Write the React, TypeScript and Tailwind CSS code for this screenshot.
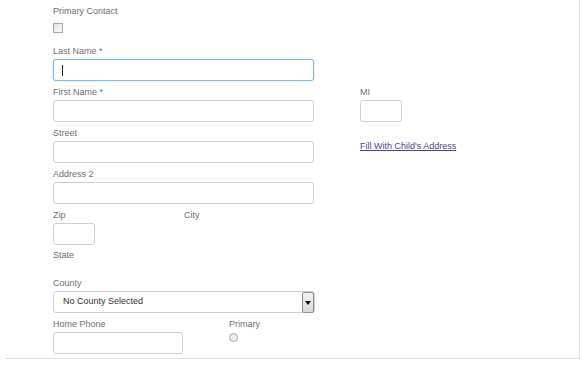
import React from "react";

const font = { fontFamily: '"Liberation Sans", Arial, sans-serif' };

function Label({ children, className = "" }: { children: React.ReactNode; className?: string }) {
  return <div className={`h-[11px] leading-[11px] text-[9px] text-[#707070] whitespace-nowrap ${className}`}>{children}</div>;
}

function Input({ w, focused = false, className = "" }: { w: string; focused?: boolean; className?: string }) {
  return (
    <div
      className={`${w} h-[22px] rounded-[3px] bg-white border flex items-center ${
        focused ? "border-[#7fb8ea] shadow-[0_0_2px_rgba(102,175,233,0.6)]" : "border-[#cfcfcf]"
      } ${className}`}
    >
      {focused && <div className="ml-[8px] w-[1px] h-[11px] bg-[#222]" />}
    </div>
  );
}

export default function App() {
  return (
    <div className="w-[582px] h-[365px] bg-white overflow-hidden" style={font}>
      <div className="ml-[5px] w-[575px] h-[359px] border-r border-b border-[#dedede] pl-[48px] pt-[6px] flex flex-col">
        <Label>Primary Contact</Label>
        <div className="mt-[6px] w-[10px] h-[10px] border border-[#a8a8a8] bg-gradient-to-br from-[#e4e4e4] to-[#f8f8f8]" />

        <Label className="mt-[13px]">Last Name *</Label>
        <Input w="w-[261px]" focused className="mt-[2px]" />

        <div className="flex mt-[6px]">
          <div className="w-[307px] flex flex-col">
            <Label>First Name *</Label>
            <Input w="w-[261px]" className="mt-[2px]" />
          </div>
          <div className="flex flex-col">
            <Label>MI</Label>
            <Input w="w-[42px]" className="mt-[2px]" />
          </div>
        </div>

        <div className="flex mt-[6px]">
          <div className="w-[307px] flex flex-col">
            <Label>Street</Label>
            <Input w="w-[261px]" className="mt-[2px]" />
          </div>
          <div className="pt-[13px] text-[9px] leading-[11px]">
            <span className="text-[#553d92] underline whitespace-nowrap">Fill With Child's Address</span>
          </div>
        </div>

        <Label className="mt-[6px]">Address 2</Label>
        <Input w="w-[261px]" className="mt-[2px]" />

        <div className="flex mt-[6px]">
          <div className="w-[131px] flex flex-col">
            <Label>Zip</Label>
            <Input w="w-[42px]" className="mt-[2px]" />
          </div>
          <Label>City</Label>
        </div>

        <Label className="mt-[5px]">State</Label>

        <Label className="mt-[17px]">County</Label>
        <div className="mt-[2px] w-[262px] h-[22px] rounded-[3px] border border-[#cfcfcf] bg-white flex items-center relative">
          <span className="ml-[9px] text-[9px] text-[#333]">No County Selected</span>
          <div className="absolute right-0 top-0 w-[12px] h-[21px] border border-[#8e8e8e] rounded-[2px] bg-gradient-to-b from-[#f4f4f4] to-[#d8d8d8] flex items-center justify-center">
            <svg width="6" height="4" viewBox="0 0 6 4"><path d="M0 0h6L3 4z" fill="#111" /></svg>
          </div>
        </div>

        <div className="flex mt-[6px]">
          <div className="w-[176px] flex flex-col">
            <Label>Home Phone</Label>
            <Input w="w-[130px]" className="mt-[2px]" />
          </div>
          <div className="flex flex-col">
            <Label>Primary</Label>
            <div className="mt-[3px] w-[9px] h-[9px] rounded-full border border-[#a8a8a8] bg-gradient-to-br from-[#e0e0e0] to-[#f6f6f6]" />
          </div>
        </div>
      </div>
    </div>
  );
}
